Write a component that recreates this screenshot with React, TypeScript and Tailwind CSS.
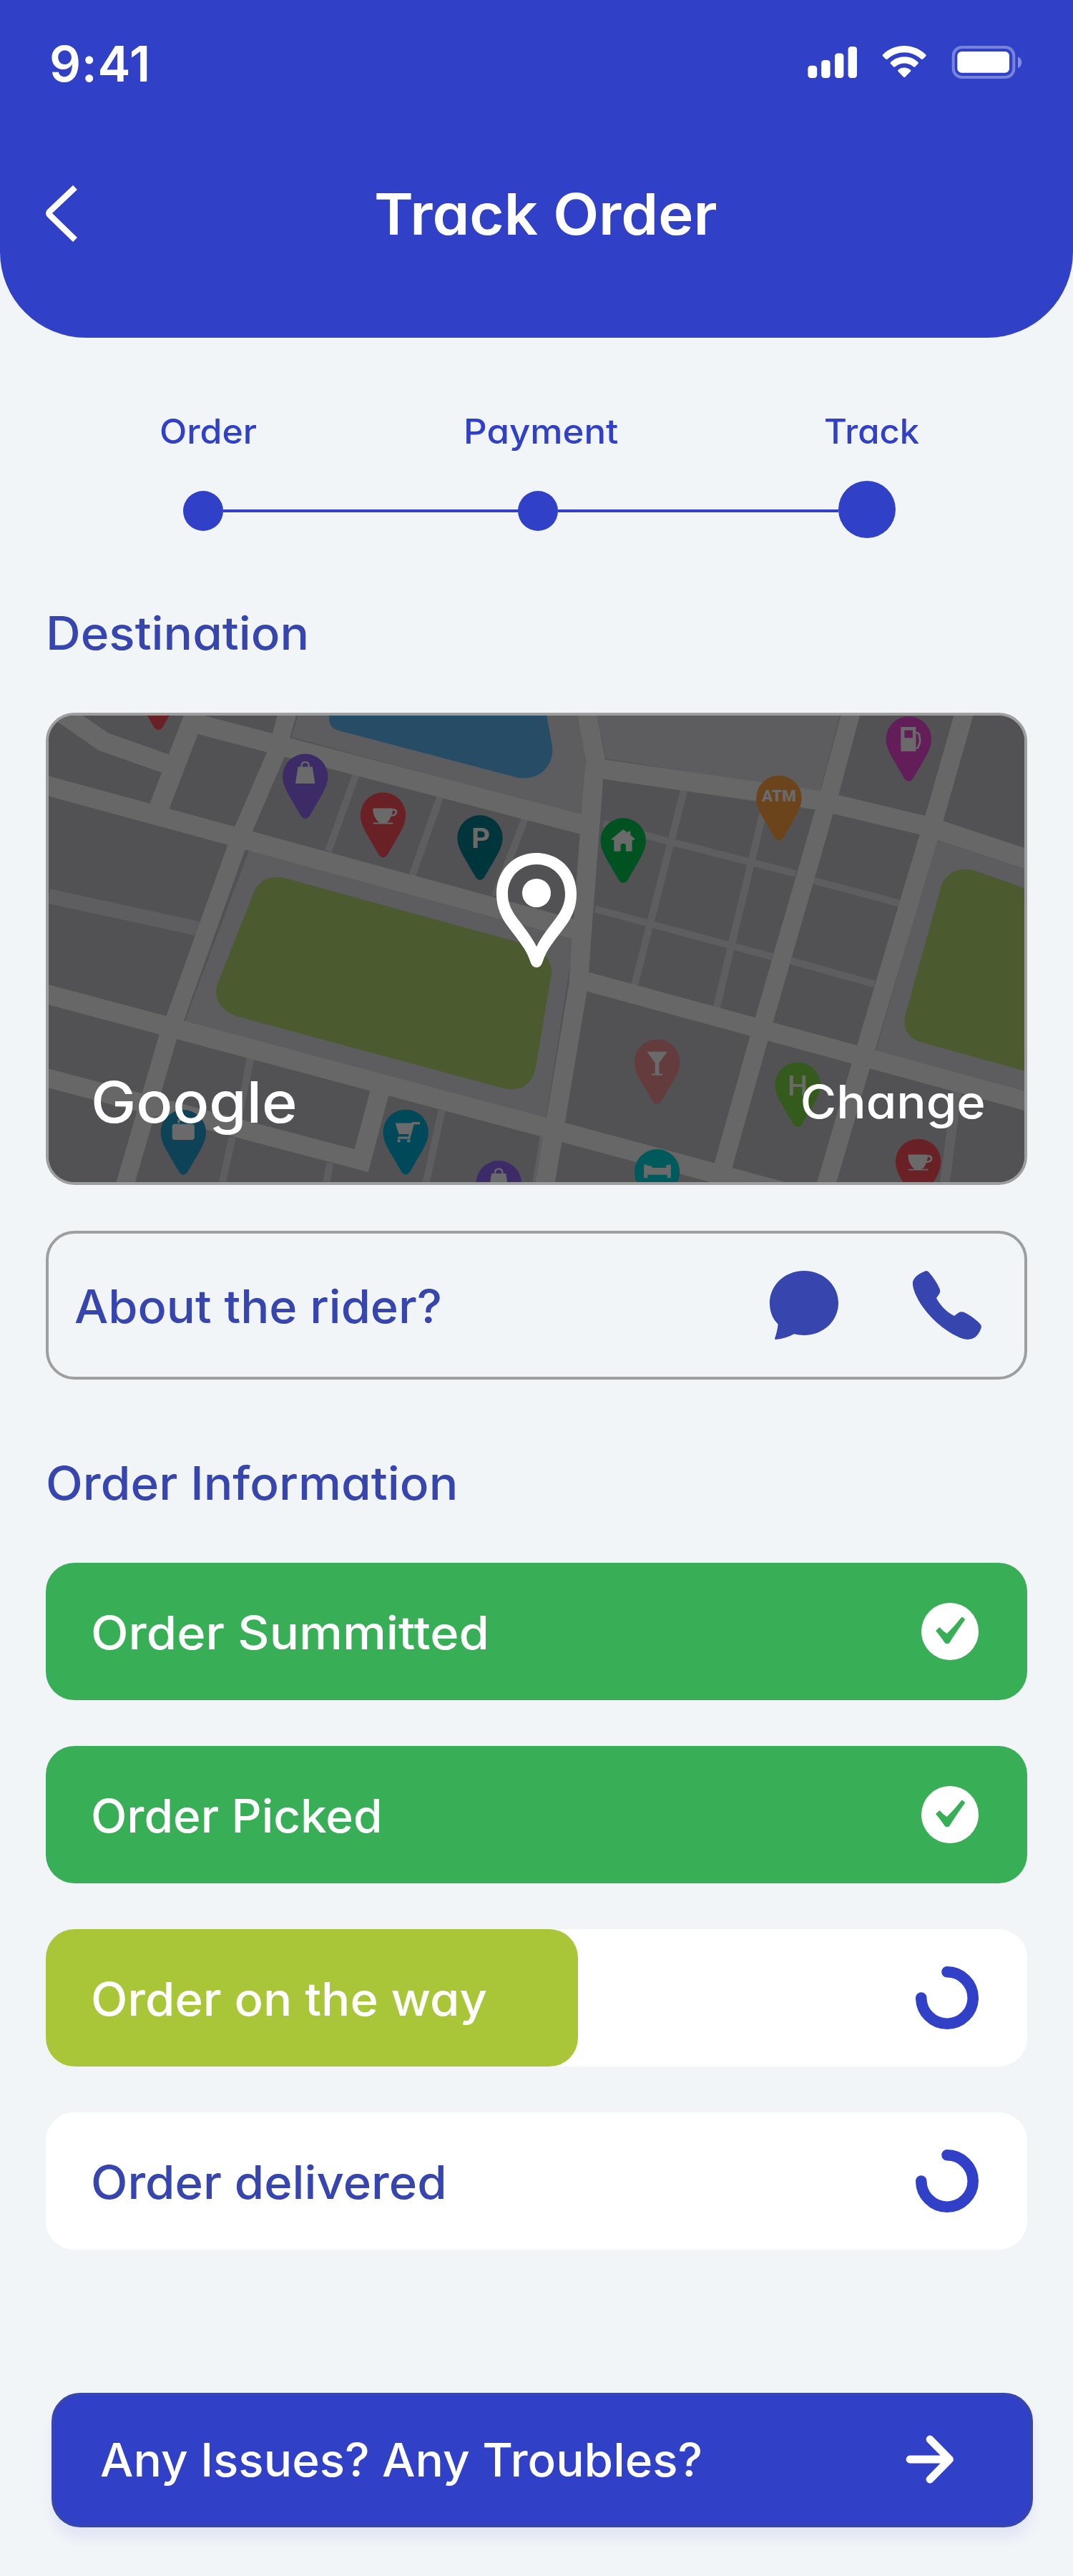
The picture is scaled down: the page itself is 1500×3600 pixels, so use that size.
import React from 'react';

const FONT = "font-['Inter',sans-serif] [font-feature-settings:'cv11']";

function StatusIcons() {
  return (
    <svg className="mb-[4px] h-[48px] w-[300px]" viewBox="1129 63 300 48" fill="white">
      <rect x="1129.4" y="91.8" width="12.8" height="17.2" rx="4.2" />
      <rect x="1148.2" y="84" width="12.4" height="25" rx="4.2" />
      <rect x="1167" y="74.4" width="12.4" height="34.6" rx="4.2" />
      <rect x="1185.6" y="65" width="12.4" height="44" rx="4.2" />
      <path d="M1264.2 64C1253.300 64 1242.300 68 1234.200 76.200Q1233.200 77.300 1234.100 78.400L1238.500 82.700Q1239.600 83.500 1240.600 82.600C1247 76.600 1255.400 73.200 1264.200 73.200S1281.400 76.600 1287.800 82.600Q1288.800 83.500 1289.900 82.700L1294.300 78.400Q1295.200 77.300 1294.200 76.200C1286.100 68 1275.100 64 1264.200 64Z" />
      <path d="M1264.200 79.200C1257 79.200 1250.200 82 1245 86.900Q1244.100 88 1245 89L1249.300 93.400Q1250.300 94.200 1251.400 93.300C1254.900 90.200 1259.500 88.400 1264.200 88.400S1273.500 90.200 1277 93.300Q1278.100 94.200 1279.100 93.400L1283.400 89Q1284.300 88 1283.400 86.900C1278.200 82 1271.400 79.200 1264.200 79.200Z" />
      <path d="M1264.200 94.600C1261 94.600 1258 95.700 1255.500 97.700Q1254.500 98.800 1255.500 99.800L1263.200 107.700Q1264.200 108.600 1265.200 107.700L1272.900 99.800Q1273.900 98.800 1272.900 97.700C1270.400 95.700 1267.400 94.600 1264.200 94.600Z" />
      <rect x="1332.700" y="66" width="84.600" height="42" rx="12" fill="none" stroke="white" strokeOpacity="0.35" strokeWidth="4" />
      <rect x="1338.300" y="72" width="72.700" height="29.800" rx="6" />
      <path d="M1423 79.300V95.200C1426.200 93.800 1428.200 90.800 1428.200 87.200S1426.200 80.600 1423 79.300Z" fillOpacity="0.4" />
    </svg>
  );
}

function Header() {
  return (
    <header className="h-[472px] rounded-b-[120px] bg-[#3041c7] pt-[49px] text-white">
      <div className="flex h-[80px] items-center justify-between pr-[71px] pl-[69px]">
        <span className="text-[69px] leading-[80px] font-semibold tracking-[0.7px]">9:41</span>
        <StatusIcons />
      </div>
      <div className="mt-[130px] flex h-[80px] items-center pl-[64px]">
        <svg className="h-[80px] w-[44px]" viewBox="0 0 44 80" fill="none" stroke="white" strokeWidth="8.500" strokeLinejoin="round">
          <path d="M41 3L5.500 36.500Q3 39 5.500 41.500L41 76" />
        </svg>
        <h1 className="ml-[415px] origin-left scale-x-[1.04] text-[80px] leading-[80px] font-semibold">Track Order</h1>
      </div>
    </header>
  );
}

function Stepper() {
  return (
    <section className="text-[#3041c7]">
      <div className="mt-[103px] flex pl-[223px] text-[48px] leading-[56px] font-medium">
        <span className="w-[425px] origin-left scale-x-[1.04]">Order</span>
        <span className="w-[504px] origin-left scale-x-[1.062]">Payment</span>
        <span className="origin-left scale-x-[1.02]">Track</span>
      </div>
      <div className="mt-[41px] flex h-[80px] w-[1252px] items-start pl-[256px]">
        <div className="mt-[14px] size-[56px] rounded-full bg-[#3041c7]" />
        <div className="mt-[40px] h-[4px] w-[412px] bg-[#3041c7]" />
        <div className="mt-[14px] size-[56px] rounded-full bg-[#3041c7]" />
        <div className="mt-[40px] h-[4px] grow bg-[#3041c7]" />
        <div className="size-[80px] rounded-full bg-[#3041c7]" />
      </div>
    </section>
  );
}

function Pin({ x, y, color, children }: { x: number; y: number; color: string; children?: React.ReactNode }) {
  return (
    <g transform={`translate(${x} ${y})`}>
      <path fill={color} d="M-69 0A69 70 0 0 1 69 0C69 25 57 47 45 68L12 126Q0 140 -12 126L-45 68C-57 47 -69 25 -69 0Z" />
      <g fill="#6a6a6a">{children}</g>
    </g>
  );
}

const Bag = () => (
  <>
    <path d="M-22 -30H22L30 23H-30Z" />
    <path d="M-11 -28V-34Q-11 -44 0 -44T11 -34V-28" fill="none" stroke="#6a6a6a" strokeWidth="5" />
  </>
);

const Cup = () => (
  <path
    fillRule="evenodd"
    d="M-31 -21H28V-19Q43 -22 43 -9Q43 4 24 5Q20 20 10 24H30V28H-30V24H-12Q-31 8 -31 -21ZM29 -13Q28 -6 26 -1Q37 -2 37 -9Q37 -15 29 -13Z"
  />
);

function MapArt() {
  return (
    <svg className="block size-full" viewBox="61 45 2970 1460" preserveAspectRatio="none">
      <rect x="61" y="45" width="2970" height="1460" fill="#525254" />

      {/* open ground */}
      <g fill="#5d5c5f">
        <path d="M820 45L800 112L1684 360L1697 180L1672 45Z" />
        <path d="M1731 45L1756 180L2409 285L2469 45Z" />
        <path d="M672 465L1660 745L1640 880L1574 1310L475 1003Z" />
        <path d="M2764 430L3031 520V1225L2579 1095Z" />
      </g>

      {/* lake and parks */}
      <path fill="#264d65" d="M915 45V55Q915 85 945 92L1490 240Q1560 248 1587 190Q1597 170 1594 140L1577 45Z" />
      <g fill="#4c5b2f">
        <path d="M775 552L1510 760Q1592 785 1592 850L1543 1150Q1525 1225 1450 1213L630 985Q560 955 573 890L685 600Q708 542 775 552Z" />
        <path d="M2875 528L3031 585V1157L2709 1065Q2656 1040 2668 985L2779 575Q2804 515 2875 528Z" />
      </g>

      {/* side streets */}
      <g fill="none" stroke="#5e5e60" strokeWidth="22">
        <path d="M61 610L525 714" strokeWidth="46" />
        <path d="M998 225L912 470" />
        <path d="M1254 295L1168 545" />
        <path d="M1510 370L1420 610" />
        <path d="M676 1115L640 1300" />
        <path d="M620 1365L590 1505" />
        <path d="M917 1445L907 1505" />
        <path d="M1258 1280L1210 1505" />
        <path d="M1568 1360L1545 1505" />
        <path d="M1996 275L1844 890" />
        <path d="M2240 330L2094 960" />
        <path d="M1750 383L1880 420L2335 540" />
        <path d="M2385 560L2650 632" />
        <path d="M1724 650L2264 800" />
        <path d="M2320 812L2575 886" />
        <path d="M2826 1215L2789 1505" strokeWidth="30" />
      </g>

      {/* main roads */}
      <g fill="none" stroke="#676767" strokeWidth="61">
        <path d="M85 25L228 127L430 200" />
        <path d="M510 30L398 330" />
        <path d="M480 62L1700 390" />
        <path d="M30 257L1670 716" />
        <path d="M790 30L753 165L642 430L445 995L423 1055L290 1525" strokeWidth="55" />
        <path d="M30 910L1568 1333L2290 1533" />
        <path d="M30 1172L1013 1438L1068 1225" strokeWidth="58" />
        <path d="M1698 30L1726 185L1720 243L1683 745L1674 885L1604 1315L1570 1525" strokeWidth="58" />
        <path d="M1715 208L2404 310L2749 395L3045 496" />
        <path d="M2505 30L2436 295L2239 997L2110 1470" strokeWidth="56" />
        <path d="M2850 30L2757 365L2549 1085L2424 1525" strokeWidth="57" />
        <path d="M1670 869L3050 1256" strokeWidth="59" />
      </g>

      <path fill="#7b6b22" d="M2950 45H3000L3008 55Q2985 44 2950 45Z" />

      <Pin x={395} y={-43} color="#6a2125" />
      <Pin x={842} y={235} color="#3c2b66"><Bag /></Pin>
      <Pin x={1079} y={356} color="#6a2125"><Cup /></Pin>
      <Pin x={1374} y={427} color="#00353b">
        <text x="2" y="33" textAnchor="middle" fontFamily="Roboto" fontWeight="700" fontSize="88">P</text>
      </Pin>
      <Pin x={471} y={1349} color="#0e4257">
        <rect x="-34" y="-26" width="68" height="50" rx="9" />
        <path d="M-14 -28V-38H14V-28" fill="none" stroke="#6a6a6a" strokeWidth="6" />
      </Pin>
      <Pin x={1148} y={1348} color="#00495b">
        <path d="M-32 -28H16L21 -31H43V-23H25L13 22H-24V15H8L10 7H-21Z" />
        <circle cx="-21" cy="28" r="5" />
        <circle cx="9" cy="28" r="5" />
      </Pin>
      <Pin x={1431} y={1508} color="#3c2b66"><Bag /></Pin>
      <Pin x={1810} y={436} color="#005220">
        <path d="M0 -35L14 -24V-29H22V-17L36 -5L31 0L27 -3V34H8V13Q0 6 -8 13V34H-28V-3L-32 0L-36 -5Z" />
      </Pin>
      <Pin x={2284} y={303} color="#6b441b">
        <text x="0" y="10" textAnchor="middle" fontFamily="Roboto" fontWeight="900" fontSize="49">ATM</text>
      </Pin>
      <Pin x={2679} y={118} color="#631d58">
        <path fillRule="evenodd" d="M-24 -37H22V39H-24ZM-13 -27V-3H12V-27Z" />
        <path d="M22 -20Q34 -18 33 -5Q37 8 31 20Q29 30 22 28" fill="none" stroke="#6a6a6a" strokeWidth="6" />
      </Pin>
      <Pin x={1913} y={1128} color="#643c3e">
        <path d="M-31 -31H31L6 4V38H16V43H-16V38H-6V4Z" />
      </Pin>
      <Pin x={2341} y={1200} color="#355a1d">
        <text x="0" y="34" textAnchor="middle" fontFamily="Roboto" fontWeight="500" fontSize="86">H</text>
      </Pin>
      <Pin x={1913} y={1472} color="#005a5c">
        <path d="M-40 -22H-30V-18H-18L-14 -12H28V-20L42 -22V20H31V10H-29V20H-40Z" />
      </Pin>
      <Pin x={2708} y={1440} color="#6a2125"><Cup /></Pin>
    </svg>
  );
}

function DestinationMap() {
  return (
    <div className="relative mt-[71px] h-[660px] overflow-hidden rounded-[40px] border-4 border-[#9e9e9e] bg-[#525254]">
      <MapArt />
      <svg className="absolute top-[192px] left-[626px] h-[160px] w-[112px]" viewBox="0 0 112 160" fill="white">
        <path fillRule="evenodd" d="M56 0C24 0 0 24 0 57C0 77 7 91 17 104C31 123 42 135 47 151Q49.500 160 56 160T65 151C70 135 81 123 95 104C105 91 112 77 112 57C112 24 88 0 56 0ZM56 16C78 16 96 33 96 57C96 72 90 82 81 94C71 107 61 120 56 131C51 120 41 107 31 94C22 82 16 72 16 57C16 33 34 16 56 16Z" />
        <circle cx="56" cy="56" r="20" />
      </svg>
      <div className="absolute inset-x-0 bottom-[72px] flex h-[80px] items-center justify-between pr-[54px] pl-[59px] leading-[80px] font-medium text-white">
        <span className="origin-left scale-x-[1.057] text-[80px]">Google</span>
        <span className="origin-right scale-x-[1.076] text-[64px]">Change</span>
      </div>
    </div>
  );
}

function RiderCard() {
  return (
    <div className="mt-[64px] flex h-[208px] items-center justify-between rounded-[40px] border-4 border-[#9e9e9e] pr-[60px] pl-[36px] text-[#3745ae]">
      <span className="origin-left scale-x-[1.042] pt-[3px] text-[64px] leading-[80px] font-medium">About the rider?</span>
      <div className="flex gap-[104px]">
        <svg className="size-[96px]" viewBox="0 0 96 96" fill="currentColor">
          <path d="M48 0C75 0 96 20 96 45S75 90 48 90Q41 90 34 88.200Q23 94.500 8.500 96Q6.600 96 7.200 94.200Q11 83 11.600 74.500C4 67 0 57 0 45C0 20 21 0 48 0Z" />
        </svg>
        <svg className="size-[96px]" viewBox="0 0 96 96" fill="currentColor">
          <path d="M17 .5Q20 -.8 22.500 2C29 9 34 17 37.500 25Q39.300 29.500 36.500 33L33 38C38 48 47 57.500 58 63L64 58.600Q69 55.800 74 59C83 64 90 69.500 94.500 74.500Q96.600 77.500 95.500 80Q93 88 87 93Q78 98.500 66 93.500C39 81.500 14 57 3 31Q-1 20 0 15Q3 6 17 .5Z" />
        </svg>
      </div>
    </div>
  );
}

function CheckBadge() {
  return (
    <svg className="size-[80px]" viewBox="0 0 80 80">
      <circle cx="40" cy="40" r="40" fill="white" />
      <path fill="#38ae57" d="M20 39L25.500 34Q30 39.500 35.800 43Q46 33 56 20.200Q57 19.500 58 20.300L61.300 23.200Q51 37 39.500 55.500Q38.500 57.300 36 57.300T32.500 55.500Q26.500 46.500 20 39Z" />
    </svg>
  );
}

function Spinner() {
  return (
    <svg className="size-[88px]" viewBox="0 0 88 88" fill="none" stroke="#3041c7" strokeWidth="15.600" strokeLinecap="round">
      <path d="M44 7.800A36.200 36.200 0 1 1 7.800 44" />
    </svg>
  );
}

const CARD = 'flex h-[192px] items-center justify-between rounded-[40px] pr-[68px] pl-[63px]';
const CARD_TEXT = 'origin-left pt-[3px] text-[64px] leading-[80px] font-medium';

function OrderCards() {
  return (
    <div className="mt-[71px] flex flex-col gap-[64px]">
      <div className={`${CARD} bg-[#38ae57] text-white`}>
        <span className={`${CARD_TEXT} scale-x-[1.072]`}>Order Summitted</span>
        <CheckBadge />
      </div>
      <div className={`${CARD} bg-[#38ae57] text-white`}>
        <span className={`${CARD_TEXT} scale-x-[1.026]`}>Order Picked</span>
        <CheckBadge />
      </div>
      <div className="flex h-[192px] items-center justify-between rounded-[40px] bg-white pr-[68px]">
        <div className="flex h-full w-[744px] items-center rounded-[40px] bg-[#a9c538] pl-[63px] text-white">
          <span className={`${CARD_TEXT} scale-x-[1.047]`}>Order on the way</span>
        </div>
        <Spinner />
      </div>
      <div className={`${CARD} bg-white text-[#3745ae]`}>
        <span className={`${CARD_TEXT} scale-x-[1.048]`}>Order delivered</span>
        <Spinner />
      </div>
    </div>
  );
}

function HelpButton() {
  return (
    <button className="mt-[200px] ml-[8px] flex h-[188px] w-[1372px] items-center justify-between rounded-[40px] border-4 border-[#3745ae] bg-[#3041c7] pr-[106px] pb-[3px] pl-[64px] text-white shadow-[0_16px_16px_rgba(48,65,199,0.08)]">
      <span className="origin-left scale-x-[1.025] pt-[2px] text-[64px] leading-[80px] font-medium">Any Issues? Any Troubles?</span>
      <svg className="h-[68px] w-[68px]" viewBox="0 0 68 68" fill="none" stroke="white" strokeWidth="10.800" strokeLinecap="round" strokeLinejoin="round">
        <path d="M6 34H61M34 6L61.500 34L34 62" />
      </svg>
    </button>
  );
}

export default function App() {
  return (
    <main className={`${FONT} h-[3600px] w-[1500px] overflow-hidden bg-[#f1f5f8]`}>
      <Header />
      <Stepper />
      <div className="px-[64px]">
        <h2 className="mt-[93px] origin-left scale-x-[1.054] text-[64px] leading-[80px] font-medium text-[#3745ae]">
          Destination
        </h2>
        <DestinationMap />
        <RiderCard />
        <h2 className="mt-[105px] origin-left scale-x-[1.056] text-[64px] leading-[80px] font-medium text-[#3745ae]">
          Order Information
        </h2>
        <OrderCards />
        <HelpButton />
      </div>
    </main>
  );
}
